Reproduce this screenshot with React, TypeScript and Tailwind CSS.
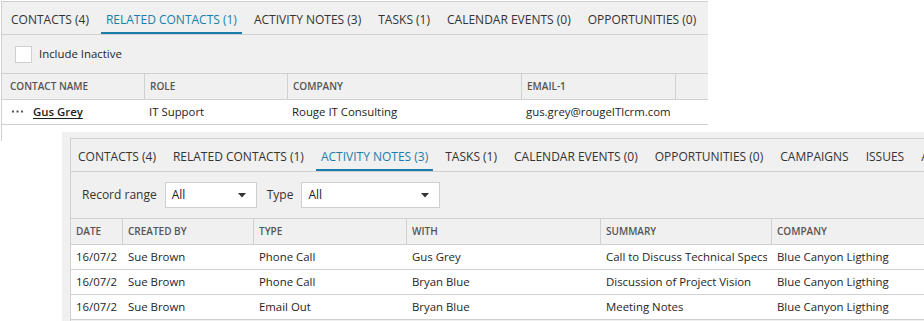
import { ReactNode } from "react"

// tab labels for the two record panels
const relatedTabs = [
  "CONTACTS (4)",
  "RELATED CONTACTS (1)",
  "ACTIVITY NOTES (3)",
  "TASKS (1)",
  "CALENDAR EVENTS (0)",
  "OPPORTUNITIES (0)",
]
const activityTabs = [...relatedTabs, "CAMPAIGNS", "ISSUES", "ATTACHMENTS"]

const notes = [
  { date: "16/07/2016", by: "Sue Brown", type: "Phone Call", with: "Gus Grey", summary: "Call to Discuss Technical Specs", company: "Blue Canyon Ligthing" },
  { date: "16/07/2016", by: "Sue Brown", type: "Phone Call", with: "Bryan Blue", summary: "Discussion of Project Vision", company: "Blue Canyon Ligthing" },
  { date: "16/07/2016", by: "Sue Brown", type: "Email Out", with: "Bryan Blue", summary: "Meeting Notes", company: "Blue Canyon Ligthing" },
]

const TabBar = ({ tabs, active, className }: { tabs: string[]; active: string; className: string }) => (
  <div className={`flex h-[33px] shrink-0 border-b border-[#d0d0d0] whitespace-nowrap text-[12px] ${className}`}>
    {tabs.map((t) => (
      <div
        key={t}
        className={`flex items-center px-[5px] pt-[5px] border-b-2 ${
          t === active ? "border-[#1b7daa] text-[#1b7daa]" : "border-transparent text-[#333]"
        }`}
      >
        {t}
      </div>
    ))}
  </div>
)

const Select = ({ w }: { w: string }) => (
  <div className={`flex items-center justify-between h-[26px] ${w} bg-white border border-[#cfcfcf] pl-[6px] pr-[10px] text-[#222]`}>
    <span>All</span>
    <svg width="8" height="5" viewBox="0 0 8 5">
      <path d="M0 0h8L4 4.5z" fill="#333" />
    </svg>
  </div>
)

const Cell = ({ w, children, head, clip }: { w: string; children: ReactNode; head?: boolean; clip?: string }) => (
  <div className={`${w} shrink-0 flex items-center pl-[5px] ${clip ?? "pr-[5px]"} ${head ? "border-r border-[#d0d0d0]" : ""}`}>
    <div className="min-w-0 overflow-hidden whitespace-nowrap">{children}</div>
  </div>
)

const App = () => {
  return (
    <div className="relative w-[924px] h-[321px] bg-white overflow-hidden text-[11.4px] text-[#1e1e1e]" style={{ fontFamily: '"Open Sans", "Noto Sans", sans-serif' }}>
      {/* Related contacts panel */}
      <div className="absolute left-0 top-0 w-[708px] h-[141px] pl-px pt-px">
        <div className="h-full border-l border-t border-[#d0d0d0] bg-white flex flex-col">
          <TabBar tabs={relatedTabs} active="RELATED CONTACTS (1)" className="bg-[#f0f0f0] pl-[4px] gap-[7px]" />
          <div className="h-[38px] shrink-0 bg-[#f0f0f0] flex items-center pl-[13px] gap-[7px]">
            <div className="w-[17px] h-[17px] bg-white border border-[#cfcfcf]" />
            <span>Include Inactive</span>
          </div>
          <div className="h-[27px] shrink-0 flex bg-[#f0f0f0] border-y border-[#d0d0d0] text-[10px] font-semibold text-[#555]">
            <div className="w-[143px] border-r border-[#d0d0d0] flex items-center pl-[8px]">CONTACT NAME</div>
            <div className="w-[143px] border-r border-[#d0d0d0] flex items-center pl-[5px]">ROLE</div>
            <div className="w-[234px] border-r border-[#d0d0d0] flex items-center pl-[5px]">COMPANY</div>
            <div className="w-[154px] border-r border-[#d0d0d0] flex items-center pl-[5px]">EMAIL-1</div>
          </div>
          <div className="h-[25px] shrink-0 flex items-center border-b border-[#d0d0d0]">
            <div className="w-[143px] flex items-center pl-[10px] gap-[10px]">
              <svg width="11" height="3" viewBox="0 0 11 3" aria-label="more">
                <rect x="0" y="0.5" width="2" height="2" fill="#555" />
                <rect x="4.5" y="0.5" width="2" height="2" fill="#555" />
                <rect x="9" y="0.5" width="2" height="2" fill="#555" />
              </svg>
              <span className="font-semibold underline underline-offset-2">Gus Grey</span>
            </div>
            <div className="w-[143px] pl-[4px]">IT Support</div>
            <div className="w-[234px] pl-[4px]">Rouge IT Consulting</div>
            <div className="w-[154px] pl-[4px]">gus.grey@rougeITlcrm.com</div>
          </div>
        </div>
      </div>

      {/* Activity notes panel, lying over the first */}
      <div className="absolute left-[62px] top-[132px] right-0 bottom-0 bg-[#f0f0f0] pl-[8px] pt-[6px]">
        <div className="h-full border-l border-t border-[#d0d0d0] flex flex-col">
          <TabBar tabs={activityTabs} active="ACTIVITY NOTES (3)" className="pl-[2px] gap-[7px]" />
          <div className="h-[46px] shrink-0 flex items-center pl-[11px] text-[12px] text-[#333]">
            <span className="mr-[8px]">Record range</span>
            <Select w="w-[92px]" />
            <span className="ml-[10px] mr-[8px]">Type</span>
            <Select w="w-[139px]" />
          </div>
          <div className="h-[27px] shrink-0 flex border-y border-[#d0d0d0] text-[10px] font-semibold text-[#555]">
            <Cell w="w-[52px]" head>DATE</Cell>
            <Cell w="w-[131px]" head>CREATED BY</Cell>
            <Cell w="w-[153px]" head>TYPE</Cell>
            <Cell w="w-[194px]" head>WITH</Cell>
            <Cell w="w-[171px]" head>SUMMARY</Cell>
            <Cell w="w-[160px]">COMPANY</Cell>
          </div>
          {notes.map((n, i) => (
            <div key={i} className="h-[25px] shrink-0 flex bg-white border-b border-[#d0d0d0]">
              <Cell w="w-[52px]" clip="pr-[6px]">{n.date}</Cell>
              <Cell w="w-[131px]">{n.by}</Cell>
              <Cell w="w-[153px]">{n.type}</Cell>
              <Cell w="w-[194px]">{n.with}</Cell>
              <Cell w="w-[171px]">{n.summary}</Cell>
              <Cell w="w-[200px]">{n.company}</Cell>
            </div>
          ))}
        </div>
      </div>
    </div>
  )
}

export default App
